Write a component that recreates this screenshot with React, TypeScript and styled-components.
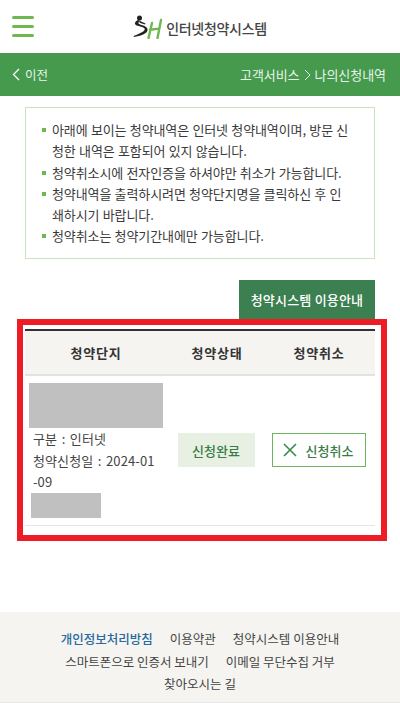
import React from "react";
import styled, { createGlobalStyle } from "styled-components";

const Global = createGlobalStyle`
  html, body { margin: 0; padding: 0; background: #fff; }
  body { font-family: "Noto Sans CJK KR", "Noto Sans", sans-serif; color: #333; }
  * { box-sizing: border-box; }
`;
const Page = styled.div`
  width: 400px; height: 703px; display: flex; flex-direction: column; overflow: hidden;
`;
const Header = styled.header`
  height: 53px; position: relative; display: flex; align-items: center; justify-content: center;
`;
const Burger = styled.div`
  position: absolute; left: 12px; top: 16px; width: 22px; display: flex; flex-direction: column; gap: 6px;
  span { display: block; height: 3px; border-radius: 2px; background: #6fb84f; }
`;
const Logo = styled.div`
  display: flex; align-items: center; gap: 3px;
`;
const LogoText = styled.span`
  font-size: 14px; letter-spacing: -0.3px; color: #444; line-height: 1; font-weight: 500; padding-top: 3px;
`;
const NavBar = styled.nav`
  height: 43px; background: #459a4d; color: #e8f3e8; display: flex; align-items: center; justify-content: space-between; padding: 0 14px 0 12px; font-size: 13px;
`;
const Back = styled.span`display: flex; align-items: center; gap: 5px; font-size: 12.5px;`;
const Crumb = styled.span`display: flex; align-items: center; gap: 4px; letter-spacing: -0.05px;`;
const Notice = styled.ul`
  list-style: none; margin: 11px 25px 0; padding: 11px 10px 11px 15px; border: 1px solid #c8e3bd; height: 152px;
`;
const NoticeItem = styled.li`
  position: relative; padding-left: 11px; font-size: 13px; line-height: 21.3px; color: #3a3a3a; letter-spacing: -0.1px; word-spacing: 0.5px; white-space: pre-line;
  &::before { content: ""; position: absolute; left: 1px; top: 9px; width: 4px; height: 4px; background: #6fb84f; }
`;
const GuideRow = styled.div`
  display: flex; justify-content: flex-end; margin: 21px 25px 0; height: 39px;
`;
const GuideButton = styled.button`
  width: 136px; height: 45px; border: 0; background: #3c7f50; color: #fff; font: inherit; font-size: 13px; font-weight: 500; padding: 0 0 6px; letter-spacing: 0.2px;
`;
const Highlight = styled.section`
  position: relative; margin: 0 13px 0 17px; height: 222px; border: 6px solid #ee1c25; padding: 4px 2px 0; background: #fff;
`;
const Table = styled.table`
  width: 350px; border-collapse: collapse; table-layout: fixed; border-top: 2px solid #333;
`;
const Th = styled.th<{ $pr?: number }>`
  height: 45px; background: #f5f4f1; border-bottom: 2px solid #e3e3e3; font-size: 13px; font-weight: 700; color: #333;
  padding: 0 ${p => p.$pr ?? 0}px 0 0; letter-spacing: 0.8px;
`;
const Td = styled.td<{ $pr?: number }>`
  padding: 0 ${p => p.$pr ?? 0}px 0 0; border-bottom: 1px solid #e5e5e5; height: 150px; vertical-align: middle; text-align: center;
`;
const InfoCell = styled(Td)`text-align: left; padding: 0 4px;`;
const Redact = styled.div<{ $w: number; $h: number; $ml: number }>`
  width: ${p => p.$w}px; height: ${p => p.$h}px; margin-left: ${p => p.$ml}px; background: #c0c0c0;
`;
const Info = styled.div`
  font-size: 13px; line-height: 21.5px; color: #444; padding: 0 0 0 4px; word-spacing: 1.5px; white-space: nowrap; letter-spacing: 0.1px;
`;
const Status = styled.span`
  display: inline-flex; align-items: center; justify-content: center; width: 77px; height: 34px; background: #e8f0e4; color: #3a7d44; font-size: 13px; font-weight: 500;
`;
const Cancel = styled.button`
  display: inline-flex; align-items: center; justify-content: center; gap: 9px; width: 94px; height: 34px; border: 1px solid #6db65b; background: #fff; color: #3a7d44; font: inherit; font-size: 13px; font-weight: 500; padding: 0 1px 0 0;
`;
const Spacer = styled.div`flex: 1;`;
const Footer = styled.footer`
  height: 91px; background: #f5f4f1; border-bottom: 1px solid #e6e6e6; padding-top: 16px; text-align: center; font-size: 12.5px; line-height: 22.5px; color: #444;
`;
const FootLine = styled.div`display: flex; justify-content: center; gap: 17px;`;
const FootLink = styled.span<{ $strong?: boolean }>`
  color: ${p => (p.$strong ? "#2a6a9e" : "#444")}; font-weight: ${p => (p.$strong ? 500 : 400)};
`;

const notices = [
  "아래에 보이는 청약내역은 인터넷 청약내역이며, 방문 신\n청한 내역은 포함되어 있지 않습니다.",
  "청약취소시에 전자인증을 하셔야만 취소가 가능합니다.",
  "청약내역을 출력하시려면 청약단지명을 클릭하신 후 인\n쇄하시기 바랍니다.",
  "청약취소는 청약기간내에만 가능합니다.",
];

export default function App() {
  return (
    <Page>
      <Global />
      <Header>
        <Burger><span /><span /><span /></Burger>
        <Logo>
          <svg width="30" height="24" viewBox="0 0 30 24" aria-hidden="true">
            <circle cx="6.5" cy="3" r="2.5" fill="#222" />
            <path d="M5 5 C3 6 1.5 7.5 2 9 C2.6 10.6 6 11 9 12 C12 13 12.6 14.6 10.5 16.2 C8 18 4 19.6 0.5 21 L1 22 C5.5 21.4 10.5 20 13 17.8 C15.5 15.6 15 12.6 11.5 11 C8.5 9.8 5.5 9.4 5.4 8 C5.4 7 6.5 6.6 8 6 Z" fill="#222" />
            <path d="M7 6 L12.5 8.4 L12 9.6 L6.5 7.8 Z" fill="#222" />
            <path d="M19 8 L15.5 23 M28 5 L24.5 23 M17 14.8 L26 13.6" stroke="#6fb84f" strokeWidth="2.4" fill="none" strokeLinecap="round" />
          </svg>
          <LogoText>인터넷청약시스템</LogoText>
        </Logo>
      </Header>
      <NavBar>
        <Back>
          <svg width="8" height="13" viewBox="0 0 8 13" aria-hidden="true"><path d="M7 1 L1.5 6.5 L7 12" stroke="#fff" strokeWidth="1.3" fill="none" /></svg>
          이전
        </Back>
        <Crumb>
          고객서비스
          <svg width="7" height="12" viewBox="0 0 7 12" aria-hidden="true"><path d="M1 1 L6 6 L1 11" stroke="#e8f3e8" strokeWidth="1" fill="none" /></svg>
          나의신청내역
        </Crumb>
      </NavBar>
      <Notice>
        {notices.map(n => <NoticeItem key={n}>{n}</NoticeItem>)}
      </Notice>
      <GuideRow><GuideButton>청약시스템 이용안내</GuideButton></GuideRow>
      <Highlight>
        <Table>
          <colgroup>
            <col style={{ width: 142 }} />
            <col style={{ width: 100 }} />
            <col style={{ width: 108 }} />
          </colgroup>
          <thead>
            <tr><Th>청약단지</Th><Th>청약상태</Th><Th $pr={4}>청약취소</Th></tr>
          </thead>
          <tbody>
            <tr>
              <InfoCell>
                <Redact $w={134} $h={45} $ml={0} />
                <Info>구분 : 인터넷<br />청약신청일 : 2024-01<br />-09</Info>
                <Redact $w={70} $h={25} $ml={2} />
              </InfoCell>
              <Td $pr={2}><Status>신청완료</Status></Td>
              <Td $pr={5}>
                <Cancel>
                  <svg width="14" height="14" viewBox="0 0 14 14" aria-hidden="true"><path d="M1 1 L13 13 M13 1 L1 13" stroke="#3a8a4a" strokeWidth="1.6" /></svg>
                  신청취소
                </Cancel>
              </Td>
            </tr>
          </tbody>
        </Table>
      </Highlight>
      <Spacer />
      <Footer>
        <FootLine><FootLink $strong>개인정보처리방침</FootLink><FootLink>이용약관</FootLink><FootLink>청약시스템 이용안내</FootLink></FootLine>
        <FootLine><FootLink>스마트폰으로 인증서 보내기</FootLink><FootLink>이메일 무단수집 거부</FootLink></FootLine>
        <FootLine><FootLink>찾아오시는 길</FootLink></FootLine>
      </Footer>
    </Page>
  );
}
